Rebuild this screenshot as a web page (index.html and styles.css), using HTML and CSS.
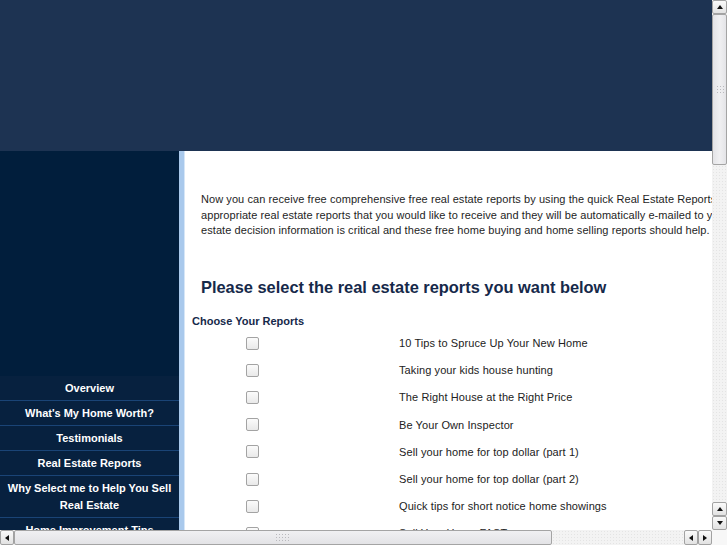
FILE: index.html
```
<!DOCTYPE html>
<html>
<head>
<meta charset="utf-8">
<title>Real Estate Reports</title>
<link rel="stylesheet" href="styles.css">
</head>
<body>
<div class="page">
  <div class="top"></div>
  <div class="wrap">
    <div class="sidebar">
      <div class="side-space"></div>
      <ul class="nav">
        <li>Overview</li>
        <li>What's My Home Worth?</li>
        <li>Testimonials</li>
        <li>Real Estate Reports</li>
        <li>Why Select me to Help You Sell Real Estate</li>
        <li>Home Improvement Tips</li>
        <li>Contact Me</li>
      </ul>
    </div>
    <div class="main">
      <p class="intro">Now you can receive free comprehensive free real estate reports by using the quick Real Estate Reports form below. Simply select the<br>appropriate real estate reports that you would like to receive and they will be automatically e-mailed to you. Accurate real<br>estate decision information is critical and these free home buying and home selling reports should help.</p>
      <h1 class="title">Please select the real estate reports you want below</h1>
      <form class="reports">
        <div class="choose">Choose Your Reports</div>
        <label class="row"><span class="cell"><input type="checkbox" class="box"></span><span class="lbl">10 Tips to Spruce Up Your New Home</span></label>
        <label class="row"><span class="cell"><input type="checkbox" class="box"></span><span class="lbl">Taking your kids house hunting</span></label>
        <label class="row"><span class="cell"><input type="checkbox" class="box"></span><span class="lbl">The Right House at the Right Price</span></label>
        <label class="row"><span class="cell"><input type="checkbox" class="box"></span><span class="lbl">Be Your Own Inspector</span></label>
        <label class="row"><span class="cell"><input type="checkbox" class="box"></span><span class="lbl">Sell your home for top dollar (part 1)</span></label>
        <label class="row"><span class="cell"><input type="checkbox" class="box"></span><span class="lbl">Sell your home for top dollar (part 2)</span></label>
        <label class="row"><span class="cell"><input type="checkbox" class="box"></span><span class="lbl">Quick tips for short notice home showings</span></label>
        <label class="row"><span class="cell"><input type="checkbox" class="box"></span><span class="lbl">Sell Your Home FAST</span></label>
        <label class="row"><span class="cell"><input type="checkbox" class="box"></span><span class="lbl">Moving with children</span></label>
      </form>
    </div>
  </div>
</div>

<div class="vscroll">
  <div class="sbtn up"><span class="tri tri-up"></span></div>
  <div class="vthumb"><span class="grip"></span></div>
  <div class="vtrack"></div>
  <div class="sbtn up"><span class="tri tri-up"></span></div>
  <div class="sbtn"><span class="tri tri-down"></span></div>
</div>
<div class="hscroll">
  <div class="sbtn hbtn"><span class="tri tri-left"></span></div>
  <div class="hthumb"><span class="grip"></span></div>
  <div class="htrack"></div>
  <div class="sbtn hbtn"><span class="tri tri-left"></span></div>
  <div class="sbtn hbtn"><span class="tri tri-right"></span></div>
</div>
<div class="corner"></div>
</body>
</html>
```
FILE: styles.css
```
html, body {
  margin: 0;
  padding: 0;
  overflow: hidden;
  background: #ffffff;
}
body {
  font-family: "Liberation Sans", Arial, sans-serif;
  color: #222222;
}
.page {
  width: 883px;
}
.top {
  height: 151px;
  background: #1d3352;
}
.wrap {
  display: flex;
  min-height: 1560px;
}
.sidebar {
  width: 179px;
  flex: none;
  background: #011e3c;
}
.side-space {
  height: 225px;
}
.nav {
  list-style: none;
  margin: 0;
  padding: 0;
}
.nav li {
  background: #07213f;
  color: #ffffff;
  font-weight: bold;
  font-size: 11px;
  line-height: 17px;
  text-align: center;
  padding: 4px 6px 3px;
  border-bottom: 1px solid #1a4476;
}
.main {
  flex: 1;
  border-left: 5px solid #a9c9ec;
  box-shadow: inset 1px 0 0 #d6e6f7;
  background: #ffffff;
}
.intro {
  margin: 41px 0 0 17px;
  font-size: 11px;
  line-height: 15.5px;
  letter-spacing: 0.07px;
  color: #1e1e1e;
  white-space: nowrap;
}
.title {
  margin: 38px 0 0 17px;
  font-size: 16.4px;
  line-height: 20px;
  font-weight: bold;
  color: #16294a;
}
.reports {
  margin: 17px 0 0 8px;
}
.choose {
  font-size: 11px;
  font-weight: bold;
  line-height: 14px;
  color: #16294a;
  margin-bottom: 2px;
}
.row {
  display: flex;
  align-items: center;
  height: 27.2px;
  font-size: 11px;
  color: #222222;
}
.cell {
  width: 120px;
  display: flex;
  justify-content: center;
}
.box {
  -webkit-appearance: none;
  appearance: none;
  margin: 0 0 0 1px;
  width: 13px;
  height: 13px;
  border: 1px solid #a3a3a3;
  border-radius: 2px;
  background: linear-gradient(#fbfbfb, #e9e9e9);
  box-sizing: border-box;
}
.lbl {
  padding-left: 87px;
  letter-spacing: 0.1px;
}

/* fake window scrollbars */
.vscroll {
  position: fixed;
  top: 0;
  right: 0;
  width: 15px;
  height: 530px;
  display: flex;
  flex-direction: column;
  background: #f4f4f4;
}
.hscroll {
  position: fixed;
  left: 0;
  bottom: 0;
  width: 712px;
  height: 15px;
  display: flex;
  background: #f4f4f4;
}
.corner {
  position: fixed;
  right: 0;
  bottom: 0;
  width: 15px;
  height: 15px;
  background: #f7f7f7;
}
.sbtn {
  flex: none;
  height: 14px;
  box-sizing: border-box;
  border: 1px solid #a2a2a2;
  border-radius: 2px;
  background: linear-gradient(#fafafa, #e2e2e2);
  display: flex;
  align-items: center;
  justify-content: center;
}
.hbtn {
  width: 14px;
  height: 15px;
}
.vthumb {
  height: 151px;
  flex: none;
  box-sizing: border-box;
  border: 1px solid #a4a4a4;
  border-radius: 2px;
  background: linear-gradient(90deg, #e4e4e7, #f0f0f2 50%, #e4e4e7);
  display: flex;
  align-items: center;
  justify-content: center;
}
.hthumb {
  width: 538px;
  flex: none;
  box-sizing: border-box;
  border: 1px solid #a4a4a4;
  border-radius: 2px;
  background: linear-gradient(#f0f0f2, #e3e3e6);
  display: flex;
  align-items: center;
  justify-content: center;
}
.vtrack, .htrack {
  flex: 1;
  background-color: #f3f3f3;
  background-image: radial-gradient(#e4e4e4 0.6px, transparent 0.8px);
  background-size: 3px 3px;
}
.grip {
  width: 8px;
  height: 10px;
  background-image: radial-gradient(#b9b9bd 0.8px, transparent 1px);
  background-size: 3px 3px;
}
.hthumb .grip {
  width: 16px;
  height: 9px;
}
.tri {
  width: 0;
  height: 0;
}
.tri-up {
  border-left: 3.5px solid transparent;
  border-right: 3.5px solid transparent;
  border-bottom: 4px solid #111;
}
.tri-down {
  border-left: 3.5px solid transparent;
  border-right: 3.5px solid transparent;
  border-top: 4px solid #111;
}
.tri-left {
  border-top: 3.5px solid transparent;
  border-bottom: 3.5px solid transparent;
  border-right: 4px solid #111;
}
.tri-right {
  border-top: 3.5px solid transparent;
  border-bottom: 3.5px solid transparent;
  border-left: 4px solid #111;
}
```
